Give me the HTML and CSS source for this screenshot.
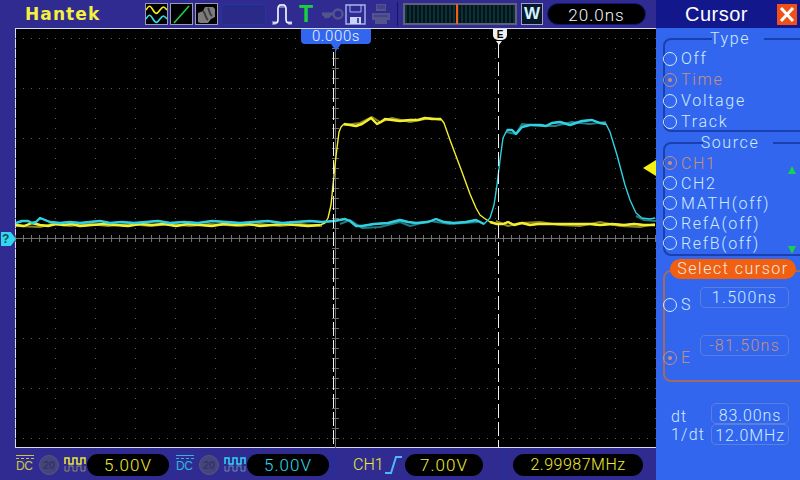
FILE: index.html
```html
<!DOCTYPE html>
<html lang="en">
<head>
    <meta charset="UTF-8">
    <title>Cursor - Hantek</title>
    <link rel="stylesheet" href="styles.css">
</head>
<body>
    <div class="scope">
        <div class="left">
            <div class="topbar">
                <div class="logo">Hantek</div>
                <div class="tool wave-box">
                    <svg width="23" height="21" viewBox="0 0 23 21"><path d="M1 6c3-5 4-5 7 0s4 4 7 0 4-4 7 0" fill="none" stroke="#f4f020" stroke-width="1.6"/><path d="M1 15c3-5 4-5 7 0s4 4 7 0 4-4 7 0" fill="none" stroke="#30e0f0" stroke-width="1.6"/></svg>
                </div>
                <div class="tool">
                    <svg width="23" height="21" viewBox="0 0 23 21"><path d="M4 19L19 2" stroke="#20d040" stroke-width="1.6"/></svg>
                </div>
                <div class="tool">
                    <svg width="23" height="21" viewBox="0 0 23 21"><path d="M3 18V9l5-2 2-4h8l2 2v8l-4 2-3 4H5z" fill="#7c7c7c"/><path d="M8 7c3 2 2 7 5 9M13 4c2 3 1 6 4 8" stroke="#3c3c3c" stroke-width="2" fill="none"/></svg>
                </div>
                <div class="tool-empty"></div>
                <svg class="pulse" width="21" height="24" viewBox="0 0 21 24"><path d="M1 21h3c2 0 2-2 2-4V7c0-3 1-4 3-4h2c2 0 3 1 3 4v10c0 3 1 4 3 4h3" fill="none" stroke="#f0f4ff" stroke-width="1.7"/><path d="M1 19v4M3 19v4M17 19v4M19 19v4M8 2v4M10 2v4M12 2v4" stroke="#f0f4ff" stroke-width=".8"/></svg>
                <div class="trig-t">T</div>
                <svg class="key" width="24" height="14" viewBox="0 0 24 14"><circle cx="18" cy="7" r="4.5" fill="none" stroke="#54548c" stroke-width="2.5"/><path d="M13 7H2M3 7l3 3 2-2 2 2" fill="none" stroke="#54548c" stroke-width="3"/></svg>
                <svg class="disk" width="21" height="21" viewBox="0 0 21 21"><path d="M1 1h19v19H1z" fill="none" stroke="#a8b8f0" stroke-width="1.4"/><path d="M5 1v7h11V1" fill="none" stroke="#a8b8f0"/><path d="M5 20v-7h11v7" fill="#c8d4f8"/><path d="M12 14h2v5h-2z" fill="#4848a0"/></svg>
                <svg class="printer" width="20" height="22" viewBox="0 0 20 22"><path d="M5 1h10v7H5zM1 10h18v7H1zM4 17h12v4H4z" fill="#54548c"/><path d="M6 3h8M6 5h8M3 13h14" stroke="#34308c"/></svg>
                <div class="divider"></div>
                <div class="overview"><span class="overview-mark"></span></div>
                <div class="w-box">W</div>
                <div class="pill time-pill">20.0ns</div>
            </div>
            <div class="main">
                <div class="screen">
                    <svg class="grid" width="641" height="419" viewBox="15 29 641 419">
                        <defs>
                            <pattern id="hdots" x="15" y="38" width="8" height="50" patternUnits="userSpaceOnUse"><rect x="0" y="0" width="1" height="1" fill="#5c5c5c"/></pattern>
                            <pattern id="vdots" x="15" y="38" width="40" height="10" patternUnits="userSpaceOnUse"><rect x="0" y="0" width="1" height="1" fill="#5c5c5c"/></pattern>
                            <pattern id="hticks" x="15" y="233" width="8" height="10" patternUnits="userSpaceOnUse"><rect x="0" y="0" width="1" height="10" fill="#707070"/></pattern>
                            <pattern id="vticks" x="330" y="38" width="10" height="10" patternUnits="userSpaceOnUse"><rect x="0" y="0" width="10" height="1" fill="#707070"/></pattern>
                        </defs>
                        <rect x="15" y="38" width="641" height="401" fill="url(#hdots)"/>
                        <rect x="15" y="38" width="641" height="401" fill="url(#vdots)"/>
                        <rect x="15" y="238" width="641" height="1" fill="#707070"/>
                        <rect x="335" y="29" width="1" height="419" fill="#707070"/>
                        <rect x="15" y="235" width="641" height="7" fill="url(#hticks)"/>
                        <rect x="332" y="38" width="7" height="401" fill="url(#vticks)"/>

                        <polyline class="ghost-y" points="16,226 40,227 52,224 70,226 90,224 108,226 130,224 150,226 170,224 190,226 210,224 240,226 260,224 280,226 300,224 322,226"/>
                        <polyline class="ghost-y" points="344,125 360,123 372,117 380,122 392,118 410,122 430,118 441,120"/>
                        <polyline class="ghost-y" points="496,221 508,226 520,223 540,222 560,225 580,226 600,222 620,226 640,227 655,224"/>
                        <polyline class="ghost-c" points="340,224 350,220 362,228 380,227 400,222 410,226 430,221 450,224 478,222"/>
                        <polyline class="ghost-c" points="506,132 516,134 522,124 540,126 555,126 572,122 590,124 606,122"/>
                        <polyline class="ghost-c" points="636,216 644,220 656,221"/>

                        <polyline class="trace-y" points="16,225 24,226 32,223 40,225 48,226 56,224 64,225 72,224 80,226 92,225 104,224 116,225 128,226 140,224 152,225 164,224 176,226 188,224 200,225 212,226 224,224 236,225 248,224 260,226 272,225 284,224 296,225 308,226 320,225 325,223 328,218 331,205 333,185 335,165 337,148 339,132 341,127 344,124 350,125 356,126 362,124 368,120 371,118 374,121 377,124 381,122 385,119 392,120 400,121 410,120 418,120 425,118 432,119 441,119 444,123 450,140 456,156 462,172 470,194 476,208 480,215 484,218 490,222 497,224 503,224 508,222 514,225 522,223 530,225 538,224 550,224 562,224 575,224 590,224 600,225 612,224 624,225 634,224 644,225 655,225"/>
                        <polyline class="flat-y" points="16,225 24,226 32,223 40,225 48,226 56,224 64,225 72,224 80,226 92,225 104,224 116,225 128,226 140,224 152,225 164,224 176,226 188,224 200,225 212,226 224,224 236,225 248,224 260,226 272,225 284,224 296,225 308,226 320,225"/>
                        <polyline class="flat-y" points="344,124 350,125 356,126 362,124 368,120 371,118 374,121 377,124 381,122 385,119 392,120 400,121 410,120 418,120 425,118 432,119 441,119"/>
                        <polyline class="flat-y" points="490,222 497,224 503,224 508,222 514,225 522,223 530,225 538,224 550,224 562,224 575,224 590,224 600,225 612,224 624,225 634,224 644,225 655,225"/>
                        <polyline class="trace-c" points="16,223 22,221 28,221 32,223 36,222 40,218 45,220 50,222 60,223 70,222 80,223 90,222 100,221 110,223 122,222 134,223 146,222 158,221 170,223 184,222 198,223 212,221 226,222 240,223 254,222 268,221 282,223 296,222 310,221 322,222 334,221 345,219 350,221 356,226 362,226 374,224 388,223 400,220 408,222 416,223 428,222 436,219 444,222 454,223 466,222 476,220 484,224 490,218 494,205 497,185 500,160 503,138 507,130 512,130 516,134 522,127 530,125 540,125 546,126 552,123 560,122 570,125 576,123 582,121 592,120 600,123 606,124 610,132 617,155 625,185 630,200 636,213 642,218 650,219 655,218"/>
                        <polyline class="flat-c" points="16,223 22,221 28,221 32,223 36,222 40,218 45,220 50,222 60,223 70,222 80,223 90,222 100,221 110,223 122,222 134,223 146,222 158,221 170,223 184,222 198,223 212,221 226,222 240,223 254,222 268,221 282,223 296,222 310,221 322,222 334,221 345,219 350,221 356,226 362,226 374,224 388,223 400,220 408,222 416,223 428,222 436,219 444,222 454,223 466,222 476,220 484,224"/>
                        <polyline class="flat-c" points="507,130 512,130 516,134 522,127 530,125 540,125 546,126 552,123 560,122 570,125 576,123 582,121 592,120 600,123 606,124"/>

                        <path class="cursor-line" d="M333.5 52V448"/>
                        <path class="cursor-line" d="M498.5 44V448"/>
                    </svg>
                    <div class="flag">0.000s</div>
                    <div class="e-tag">E</div>
                    <div class="e-arrow"></div>
                    <div class="trig-arrow"></div>
                    <div class="ground">?</div>
                </div>
            </div>
            <div class="bottombar">
                <div class="coupling yellow">DC</div>
                <div class="limit">20</div>
                <svg class="probe" width="22" height="20" viewBox="0 0 22 20"><path d="M1 9V3h4v6h4V3h4v6h4V3h4v6" fill="none" stroke="#f0ec30" stroke-width="1.5"/><path d="M1 11v5h4v-5h4v5h4v-5h4v5h4v-5" fill="none" stroke="#8a8a70" stroke-width="1"/></svg>
                <div class="pill ch-pill yellow">5.00V</div>
                <div class="sep"></div>
                <div class="coupling cyan">DC</div>
                <div class="limit">20</div>
                <svg class="probe" width="22" height="20" viewBox="0 0 22 20"><path d="M1 9V3h4v6h4V3h4v6h4V3h4v6" fill="none" stroke="#30d8f0" stroke-width="1.5"/><path d="M1 11v5h4v-5h4v5h4v-5h4v5h4v-5" fill="none" stroke="#6a8ab0" stroke-width="1"/></svg>
                <div class="pill ch-pill cyan">5.00V</div>
                <div class="sep"></div>
                <div class="trig-src yellow">CH1</div>
                <svg class="edge" width="18" height="20" viewBox="0 0 18 20"><path d="M0 18h6L11 2h6" fill="none" stroke="#50b8f8" stroke-width="2"/></svg>
                <div class="pill trig-pill yellow">7.00V</div>
                <div class="sep sep-freq"></div>
                <div class="pill freq-pill yellow">2.99987MHz</div>
            </div>
        </div>

        <div class="panel">
            <div class="panel-head">
                <div class="panel-title">Cursor</div>
                <div class="close">
                    <svg width="20" height="21" viewBox="0 0 20 21"><path d="M4 4l12 13M16 4L4 17" stroke="#fff" stroke-width="3"/></svg>
                </div>
            </div>
            <fieldset class="group type-group">
                <legend>Type</legend>
                <div class="opt"><span class="radio"></span>Off</div>
                <div class="opt on"><span class="radio"></span>Time</div>
                <div class="opt"><span class="radio"></span>Voltage</div>
                <div class="opt"><span class="radio"></span>Track</div>
            </fieldset>
            <fieldset class="group source-group">
                <legend>Source</legend>
                <div class="opt on"><span class="radio"></span>CH1</div>
                <div class="opt"><span class="radio"></span>CH2</div>
                <div class="opt"><span class="radio"></span>MATH(off)</div>
                <div class="opt"><span class="radio"></span>RefA(off)</div>
                <div class="opt"><span class="radio"></span>RefB(off)</div>
                <span class="scroll-up"></span>
                <span class="scroll-down"></span>
            </fieldset>
            <div class="select-box">
                <div class="select-title">Select cursor</div>
                <div class="cursor-row row-s">
                    <div class="opt"><span class="radio"></span>S</div>
                    <div class="value">1.500ns</div>
                </div>
                <div class="cursor-row row-e">
                    <div class="opt on"><span class="radio"></span>E</div>
                    <div class="value on">-81.50ns</div>
                </div>
            </div>
            <div class="delta">
                <div class="delta-row row-dt"><span class="delta-label">dt</span><div class="value">83.00ns</div></div>
                <div class="delta-row"><span class="delta-label">1/dt</span><div class="value">12.0MHz</div></div>
            </div>
        </div>
    </div>
</body>
</html>
```
FILE: styles.css
```css
* {
  box-sizing: border-box;
}

body {
  margin: 0;
  width: 800px;
  height: 480px;
  overflow: hidden;
  background: #2f2b90;
  font-family: Roboto, "Liberation Sans", sans-serif;
  font-weight: 300;
}

.scope {
  display: flex;
  width: 800px;
  height: 480px;
}

.left {
  width: 656px;
  display: flex;
  flex-direction: column;
}

.yellow {
  color: #f0ec30;
}

.cyan {
  color: #30d8f0;
}

/* top bar */
.topbar {
  height: 28px;
  display: flex;
  align-items: center;
}

.logo {
  width: 120px;
  margin-left: 25px;
  font-family: "DejaVu Sans", sans-serif;
  font-weight: bold;
  font-size: 17px;
  letter-spacing: 1.1px;
  color: #f4f040;
}

.tool {
  width: 23px;
  height: 22px;
  margin-right: 2px;
  background: #000;
  border: 1px solid #9a9ab0;
  display: flex;
  align-items: center;
  justify-content: center;
  overflow: hidden;
}

.tool svg {
  flex: none;
}

.tool-empty {
  width: 45px;
  height: 21px;
  margin-left: 1px;
  margin-right: 6px;
  border: 1px solid #2038a0;
  border-radius: 5px;
  background: #2c2a88;
}

.trig-t {
  width: 15px;
  margin-left: 6px;
  font-family: "Liberation Sans", sans-serif;
  font-weight: bold;
  font-size: 23px;
  line-height: 24px;
  color: #18d040;
}

.key {
  margin-left: 6px;
}

.disk {
  margin-left: 1px;
}

.printer {
  margin-left: 5px;
}

.divider {
  width: 1px;
  height: 24px;
  margin-left: 6px;
  background: #14146c;
}

.overview {
  width: 114px;
  height: 22px;
  margin-left: 5px;
  position: relative;
  border: 2px solid #606078;
  background: repeating-linear-gradient(90deg, #0c3038 0 2px, #051418 2px 4px);
}

.overview-mark {
  position: absolute;
  left: 51px;
  top: -1px;
  width: 2px;
  height: 20px;
  background: #f06018;
}

.w-box {
  width: 22px;
  height: 22px;
  margin-left: 4px;
  background: #081828;
  border: 1px solid #a0a0c0;
  color: #d0f4ff;
  font-family: "Liberation Sans", sans-serif;
  font-weight: bold;
  font-size: 17px;
  line-height: 20px;
  text-align: center;
}

.pill {
  height: 22px;
  background: #000;
  border-radius: 11px;
  font-size: 17px;
  line-height: 22px;
  letter-spacing: 1px;
  text-align: center;
}

.time-pill {
  width: 99px;
  margin-left: 4px;
  color: #f0f8ff;
  border: 1px solid #101878;
}

/* waveform area */
.main {
  flex: 1;
  padding-left: 15px;
}

.screen {
  position: relative;
  width: 641px;
  height: 420px;
  background: #000;
  border-top: 1px solid #d8d8f0;
  border-bottom: 1px solid #d8d8f0;
  border-left: 1px solid #d8d8f0;
}

.grid {
  display: block;
  margin-left: -1px;
}

.ghost-y,
.ghost-c,
.trace-y,
.trace-c,
.flat-y,
.flat-c {
  fill: none;
  stroke-linejoin: round;
}

.ghost-y {
  stroke: #8a8420;
  stroke-width: 2;
}

.ghost-c {
  stroke: #207a80;
  stroke-width: 2;
}

.trace-y {
  stroke: #f2ee30;
  stroke-width: 1.4;
}

.trace-c {
  stroke: #30d0e0;
  stroke-width: 1.4;
}

.flat-y {
  stroke: #f2ee30;
  stroke-width: 2.4;
}

.flat-c {
  stroke: #30d0e0;
  stroke-width: 2.4;
}

.cursor-line {
  stroke: #f0f0f0;
  stroke-width: 1;
  stroke-dasharray: 14 4;
}

.flag {
  position: absolute;
  left: 285px;
  top: 0;
  width: 70px;
  height: 15px;
  background: #3366ee;
  border-radius: 0 0 4px 4px;
  color: #e8f4ff;
  font-size: 15px;
  line-height: 15px;
  letter-spacing: 0.6px;
  text-align: center;
}

.flag::after {
  content: "";
  position: absolute;
  left: 30px;
  top: 15px;
  border-left: 5px solid transparent;
  border-right: 5px solid transparent;
  border-top: 7px solid #3366ee;
}

.e-tag {
  position: absolute;
  left: 477px;
  top: 0;
  width: 14px;
  height: 11px;
  background: #f0f0f0;
  border-radius: 0 0 5px 5px;
  color: #000;
  font-family: "Liberation Sans", sans-serif;
  font-weight: bold;
  font-size: 10px;
  line-height: 11px;
  text-align: center;
}

.e-arrow {
  position: absolute;
  left: 480px;
  top: 12px;
  border-left: 3px solid transparent;
  border-right: 3px solid transparent;
  border-top: 4px solid #f0f0f0;
}

.trig-arrow {
  position: absolute;
  right: 0;
  top: 131px;
  border-top: 8px solid transparent;
  border-bottom: 8px solid transparent;
  border-right: 13px solid #f4f010;
}

.ground {
  position: absolute;
  left: -15px;
  top: 203px;
  width: 15px;
  height: 14px;
  background: #30d8f0;
  clip-path: polygon(0 0, 65% 0, 100% 50%, 65% 100%, 0 100%);
  color: #105050;
  font-family: "Liberation Sans", sans-serif;
  font-weight: bold;
  font-size: 12px;
  line-height: 14px;
  padding-left: 1px;
}

/* bottom bar */
.bottombar {
  flex: 1;
  display: flex;
  align-items: center;
  padding-left: 16px;
  padding-top: 1px;
}

.coupling {
  width: 18px;
  height: 20px;
  border-top: 1px solid currentColor;
  font-family: "Liberation Sans", sans-serif;
  font-weight: normal;
  font-size: 12px;
  line-height: 13px;
  padding-top: 4px;
  position: relative;
  opacity: 0.8;
  letter-spacing: -0.5px;
}

.coupling::before {
  content: "";
  position: absolute;
  left: 0;
  right: 0;
  top: 2px;
  border-top: 1px dashed currentColor;
}

.limit {
  width: 20px;
  height: 20px;
  margin-left: 5px;
  border-radius: 50%;
  background: #45457c;
  border: 1px solid #55558a;
  color: #33336a;
  font-family: "Liberation Sans", sans-serif;
  font-weight: bold;
  font-size: 11px;
  line-height: 18px;
  text-align: center;
}

.probe {
  margin-left: 5px;
}

.ch-pill {
  width: 82px;
  margin-left: 1px;
}

.bottombar .pill {
  height: 22px;
}

.sep {
  width: 1px;
  height: 26px;
  margin-left: 3px;
  margin-right: 3px;
  background: #1830a8;
}

.trig-src {
  width: 27px;
  margin-left: 17px;
  font-size: 16px;
  letter-spacing: 0;
  white-space: nowrap;
}

.edge {
  margin-left: 5px;
}

.trig-pill {
  width: 78px;
  margin-left: 2px;
}

.sep-freq {
  margin-left: 19px;
  margin-right: 10px;
}

.freq-pill {
  width: 130px;
  font-size: 16px;
  letter-spacing: 0.5px;
}

/* right panel */
.panel {
  width: 144px;
  height: 480px;
  overflow: hidden;
  background: #3366ee;
  color: #d0ecff;
  display: flex;
  flex-direction: column;
}

.panel-head {
  height: 28px;
  flex: none;
  display: flex;
  align-items: center;
  background: #12188c;
}

.panel-title {
  width: 121px;
  color: #fff;
  font-family: "Liberation Sans", sans-serif;
  font-weight: normal;
  font-size: 20px;
  letter-spacing: 0.5px;
  text-align: center;
}

.close {
  width: 20px;
  height: 21px;
  background: #f05018;
}

.close svg {
  display: block;
}

.group {
  width: 150px;
  margin: 0 0 0 7px;
  padding: 0;
  border: 2px solid #1a3fb0;
  border-radius: 8px 0 0 8px;
  min-width: 0;
}

.group legend {
  margin: 0 auto;
  padding: 0 6px;
  font-size: 16px;
  line-height: 18px;
  letter-spacing: 1.6px;
  position: relative;
  left: -8px;
}

.type-group {
  margin-top: 2px;
  height: 102px;
}

.source-group {
  position: relative;
  margin-top: 2px;
  padding-top: 1px;
  height: 122px;
}

.opt {
  height: 21px;
  display: flex;
  align-items: center;
  font-size: 16px;
  letter-spacing: 1.7px;
  margin-left: -2px;
}

.source-group .opt {
  height: 20px;
}

.opt.on {
  color: #c8907c;
}

.radio {
  position: relative;
  width: 14px;
  height: 14px;
  margin-right: 4px;
  border: 1px solid currentColor;
  border-radius: 50%;
  flex: none;
}

.on .radio::after {
  content: "";
  position: absolute;
  left: 4px;
  top: 4px;
  width: 4px;
  height: 4px;
  border-radius: 50%;
  background: currentColor;
}

.scroll-up,
.scroll-down {
  position: absolute;
  left: 123px;
  border-left: 4px solid transparent;
  border-right: 4px solid transparent;
}

.scroll-up {
  top: 14px;
  border-bottom: 8px solid #18d050;
}

.scroll-down {
  top: 94px;
  border-top: 8px solid #18d050;
}

.select-box {
  position: relative;
  width: 150px;
  height: 112px;
  margin: 14px 0 0 7px;
  padding: 15px 0 0;
  border: 2px solid #a06a60;
  border-radius: 8px 0 0 8px;
}

.select-title {
  position: absolute;
  left: 5px;
  top: -13px;
  width: 126px;
  height: 20px;
  border-radius: 10px;
  background: #f06010;
  color: #f4e8e0;
  font-size: 16px;
  line-height: 19px;
  letter-spacing: 1.5px;
  text-align: center;
}

.cursor-row {
  position: relative;
  height: 48px;
}

.cursor-row .opt {
  position: absolute;
  left: 0;
}

.row-s .opt {
  top: 7px;
}

.row-e .opt {
  top: 12px;
}

.value {
  position: absolute;
  left: 35px;
  top: 0;
  width: 89px;
  height: 21px;
  border: 1px solid #5c80d8;
  border-radius: 5px;
  font-size: 16px;
  line-height: 19px;
  letter-spacing: 1.3px;
  text-align: center;
}

.value.on {
  color: #c8907c;
}

.delta {
  margin-top: 21px;
}

.delta-row {
  position: relative;
  height: 21px;
  padding-left: 15px;
  font-size: 16px;
  line-height: 21px;
  letter-spacing: 1.2px;
}

.row-dt {
  padding-top: 3px;
}

.delta-row .value {
  left: 55px;
  width: 78px;
  letter-spacing: 0.9px;
  line-height: 21px;
}

.row-dt .value {
  line-height: 24px;
}
```
